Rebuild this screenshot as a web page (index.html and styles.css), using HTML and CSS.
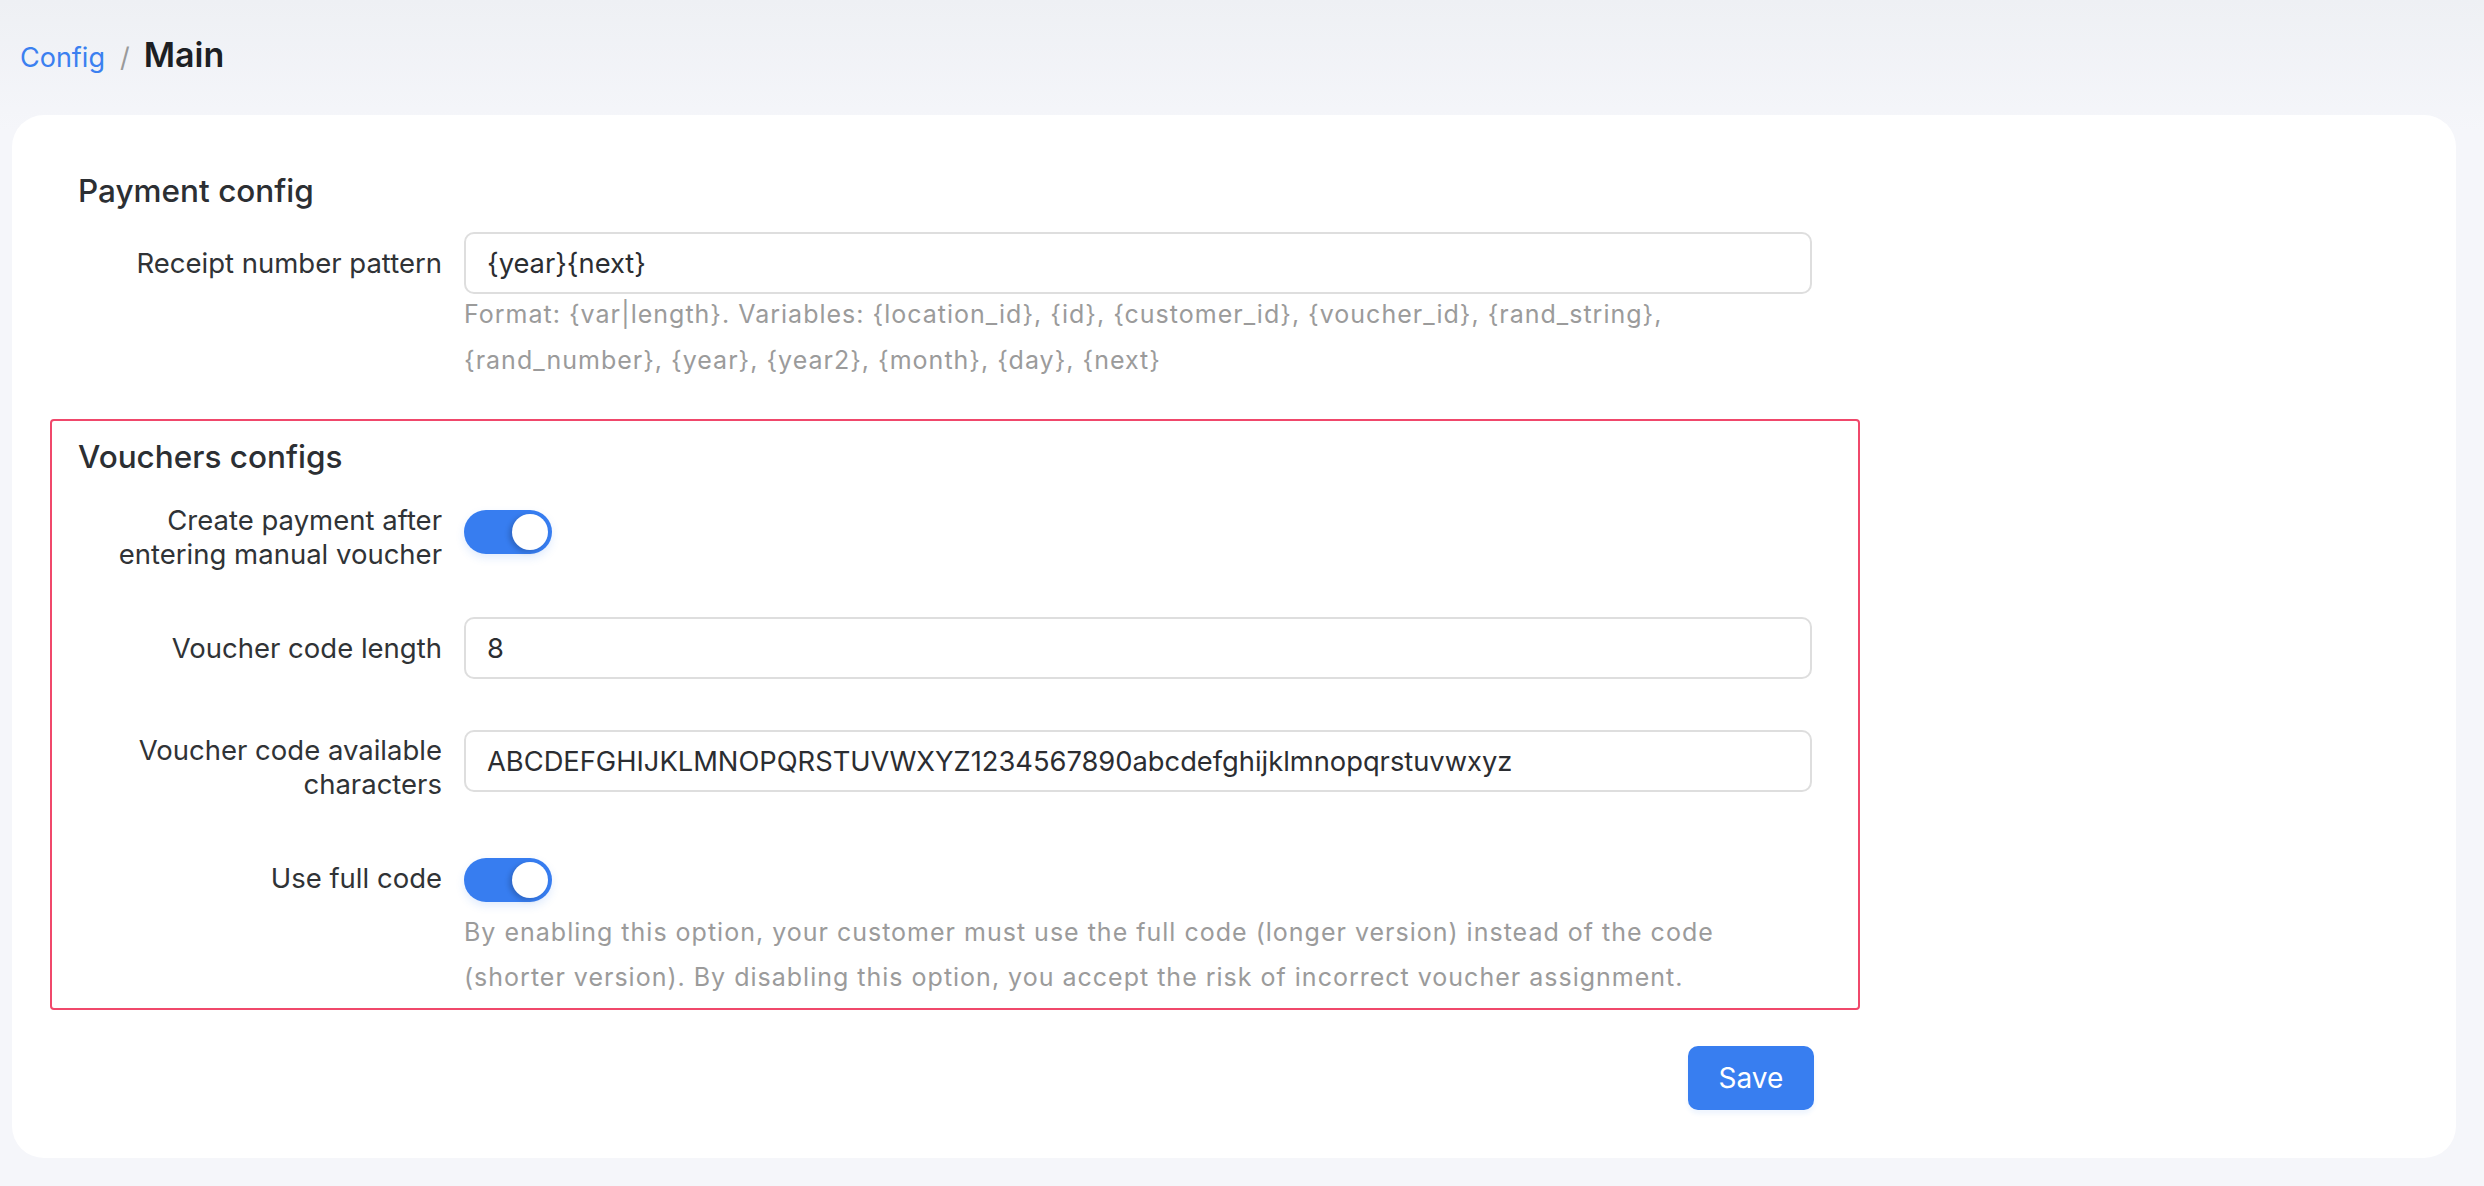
FILE: index.html
```html
<!DOCTYPE html>
<html lang="en">
<head>
  <meta charset="UTF-8" />
  <meta name="viewport" content="width=device-width, initial-scale=1.0" />
  <title>Config - Main</title>
  <link rel="stylesheet" href="styles.css">
</head>
<body>

  <div class="breadcrumb">
    <a href="#" class="crumb-link">Config</a>
    <span class="crumb-sep">/</span>
    <span class="crumb-current">Main</span>
  </div>

  <div class="card">

    <div class="section">
      <h2>Payment config</h2>
      <div class="row">
        <label class="row-label" for="receiptPattern">Receipt number pattern</label>
        <div class="row-control">
          <input type="text" id="receiptPattern" class="text-input" value="{year}{next}" />
          <p class="help">Format: {var|length}. Variables: {location_id}, {id}, {customer_id}, {voucher_id}, {rand_string}, {rand_number}, {year}, {year2}, {month}, {day}, {next}</p>
        </div>
      </div>
    </div>

    <div class="section highlight">
      <h2>Vouchers configs</h2>

      <div class="row row-toggle-first">
        <label class="row-label">Create payment after<br>entering manual voucher</label>
        <div class="row-control">
          <span class="toggle on"><span class="knob"></span></span>
        </div>
      </div>

      <div class="row row-length">
        <label class="row-label" for="codeLength">Voucher code length</label>
        <div class="row-control">
          <input type="text" id="codeLength" class="text-input" value="8" />
        </div>
      </div>

      <div class="row row-chars">
        <label class="row-label" for="codeChars">Voucher code available characters</label>
        <div class="row-control">
          <input type="text" id="codeChars" class="text-input" value="ABCDEFGHIJKLMNOPQRSTUVWXYZ1234567890abcdefghijklmnopqrstuvwxyz" />
        </div>
      </div>

      <div class="row row-toggle-last">
        <label class="row-label">Use full code</label>
        <div class="row-control">
          <span class="toggle on"><span class="knob"></span></span>
          <p class="help help-after-toggle">By enabling this option, your customer must use the full code (longer version) instead of the code (shorter version). By disabling this option, you accept the risk of incorrect voucher assignment.</p>
        </div>
      </div>
    </div>

    <div class="actions">
      <button type="submit" class="save-btn">Save</button>
    </div>

  </div>

</body>
</html>
```

FILE: styles.css
```css
html, body {
  height: 100%;
}

body {
  margin: 0;
  padding: 0 28px 28px 12px;
  box-sizing: border-box;
  font-family: Inter, "Noto Sans", Arial, sans-serif;
  color: #2f3236;
  background: linear-gradient(#eef0f4 0, #f5f6fa 130px) #f5f6fa;
}

.breadcrumb {
  display: flex;
  align-items: baseline;
  padding: 35px 0 40px 8px;
  height: 40px;
  line-height: 40px;
}

.crumb-link {
  color: #3b80f0;
  text-decoration: none;
  font-size: 27px;
}

.crumb-sep {
  color: #9a9a9a;
  font-size: 27px;
  margin: 0 14px 0 15px;
}

.crumb-current {
  color: #1d1f23;
  font-size: 34px;
  font-weight: 600;
}

.card {
  background: #ffffff;
  border-radius: 32px;
  padding: 38px;
  height: 1043px;
  box-sizing: border-box;
}

.section {
  max-width: 1810px;
  box-sizing: border-box;
  border: 2px solid transparent;
  border-radius: 4px;
  padding: 18px 46px 8px 26px;
  margin-bottom: 26px;
}

.section.highlight {
  border-color: #f0486b;
  margin-bottom: 36px;
}

h2 {
  font-size: 31.5px;
  line-height: 36px;
  font-weight: 500;
  margin: 0 0 23px 0;
  color: #2c2f33;
}

.row {
  display: grid;
  grid-template-columns: 364px 1fr;
  column-gap: 22px;
  align-items: start;
}

.row-label {
  text-align: right;
  font-size: 27.5px;
  line-height: 34px;
  padding-top: 14px;
  color: #303336;
}

.text-input {
  display: block;
  width: 100%;
  box-sizing: border-box;
  height: 62px;
  padding: 0 21px;
  font-family: Inter, "Noto Sans", Arial, sans-serif;
  font-size: 27.3px;
  color: #2b2d31;
  border: 2px solid #dedede;
  border-radius: 10px;
  background: #ffffff;
  outline: none;
}

.help {
  margin: -3px 0 0 0;
  font-size: 25px;
  letter-spacing: 1px;
  line-height: 46px;
  color: #9b9b9b;
}

.row-toggle-first {
  padding-top: 5px;
}

.row-toggle-first .row-label {
  padding-top: 0;
}

.row-toggle-first .toggle {
  margin-top: 7px;
}

.row-length {
  margin-top: 46px;
}

.row-chars {
  margin-top: 51px;
}

.row-chars .row-label {
  padding-top: 3px;
}

.row-toggle-last {
  margin-top: 57px;
}

.row-toggle-last .row-label {
  padding-top: 3px;
}

.toggle {
  display: block;
  position: relative;
  width: 88px;
  height: 44px;
  border-radius: 22px;
  background: #377df0;
  box-shadow: 0 4px 8px rgba(55, 125, 240, 0.15);
}

.toggle .knob {
  position: absolute;
  top: 4px;
  right: 4px;
  width: 36px;
  height: 36px;
  border-radius: 50%;
  background: #ffffff;
  box-shadow: -3px 2px 5px rgba(0, 0, 0, 0.18);
}

.help-after-toggle {
  margin-top: 8px;
  line-height: 45px;
}

.actions {
  max-width: 1810px;
  box-sizing: border-box;
  padding-right: 46px;
  display: flex;
  justify-content: flex-end;
}

.save-btn {
  width: 126px;
  height: 64px;
  border: none;
  border-radius: 10px;
  background: #387ef0;
  color: #ffffff;
  font-family: Inter, "Noto Sans", Arial, sans-serif;
  font-size: 28px;
  cursor: pointer;
  box-shadow: 0 4px 4px rgba(56, 126, 240, 0.08);
}
```
